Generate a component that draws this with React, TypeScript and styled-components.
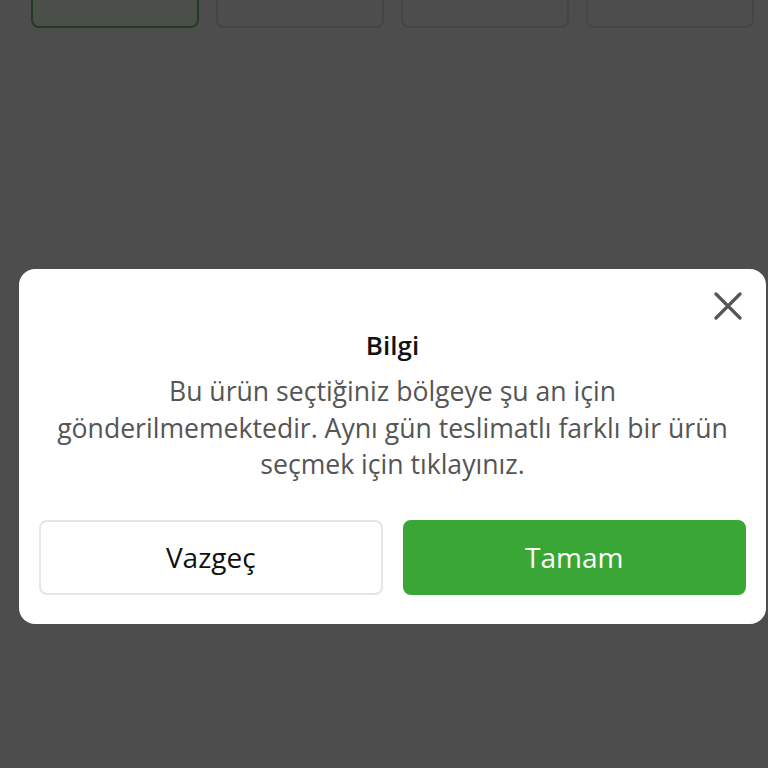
import styled, { createGlobalStyle } from "styled-components";

const GlobalStyle = createGlobalStyle`
  html, body {
    margin: 0;
    padding: 0;
    background: #4d4d4d;
    font-family: "Open Sans", "Noto Sans", sans-serif;
  }
  * {
    box-sizing: border-box;
  }
`;

const Screen = styled.div`
  width: 768px;
  height: 768px;
  overflow: hidden;
  background: #4d4d4d;
  display: flex;
  flex-direction: column;
`;

const TileRow = styled.div`
  display: grid;
  grid-template-columns: repeat(4, 168px);
  gap: 17px;
  padding-left: 31px;
  margin-top: -20px;
`;

const Tile = styled.div<{ $active?: boolean }>`
  height: 48px;
  border-radius: 8px;
  border: 2px solid ${(p) => (p.$active ? "#253a22" : "#454545")};
  background: ${(p) => (p.$active ? "#4a4f49" : "#4d4d4d")};
`;

const Overlay = styled.div`
  flex: 1;
  display: flex;
  flex-direction: column;
  padding: 241px 2px 0 19px;
`;

const Modal = styled.div`
  position: relative;
  background: #fff;
  border-radius: 16px;
  padding: 61px 20px 29px;
  display: flex;
  flex-direction: column;
  align-items: center;
`;

const CloseButton = styled.button`
  position: absolute;
  top: 21px;
  right: 22px;
  width: 32px;
  height: 32px;
  padding: 0;
  border: none;
  background: none;
  cursor: pointer;
  display: flex;
  align-items: center;
  justify-content: center;
`;

const Title = styled.h2`
  margin: 0;
  font-size: 26px;
  font-weight: 600;
  color: #111;
  line-height: 30px;
`;

const Message = styled.p`
  margin: 13px 0 0;
  font-size: 26.6px;
  line-height: 36.5px;
  color: #555;
  text-align: center;
  max-width: 700px;
`;

const Actions = styled.div`
  align-self: stretch;
  display: grid;
  grid-template-columns: 1fr 1fr;
  gap: 20px;
  margin-top: 37px;
`;

const ActionButton = styled.button<{ $primary?: boolean }>`
  height: 75px;
  border-radius: 8px;
  font-family: inherit;
  font-size: 28px;
  cursor: pointer;
  border: 2px solid ${(p) => (p.$primary ? "#3aa636" : "#e6e6e6")};
  background: ${(p) => (p.$primary ? "#3aa636" : "#fff")};
  color: ${(p) => (p.$primary ? "#fff" : "#111")};
`;

const App: React.FC = () => {
  return (
    <>
      <GlobalStyle />
      <Screen>
        <TileRow>
          <Tile $active />
          <Tile />
          <Tile />
          <Tile />
        </TileRow>
        <Overlay>
          <Modal>
            <CloseButton aria-label="Kapat">
              <svg width="28" height="28" viewBox="0 0 28 28">
                <path
                  d="M2 2 L26 26 M26 2 L2 26"
                  stroke="#555"
                  strokeWidth="3.2"
                  strokeLinecap="round"
                />
              </svg>
            </CloseButton>
            <Title>Bilgi</Title>
            <Message>
              Bu ürün seçtiğiniz bölgeye şu an için gönderilmemektedir. Aynı gün
              teslimatlı farklı bir ürün seçmek için tıklayınız.
            </Message>
            <Actions>
              <ActionButton>Vazgeç</ActionButton>
              <ActionButton $primary>Tamam</ActionButton>
            </Actions>
          </Modal>
        </Overlay>
      </Screen>
    </>
  );
};

export default App;
